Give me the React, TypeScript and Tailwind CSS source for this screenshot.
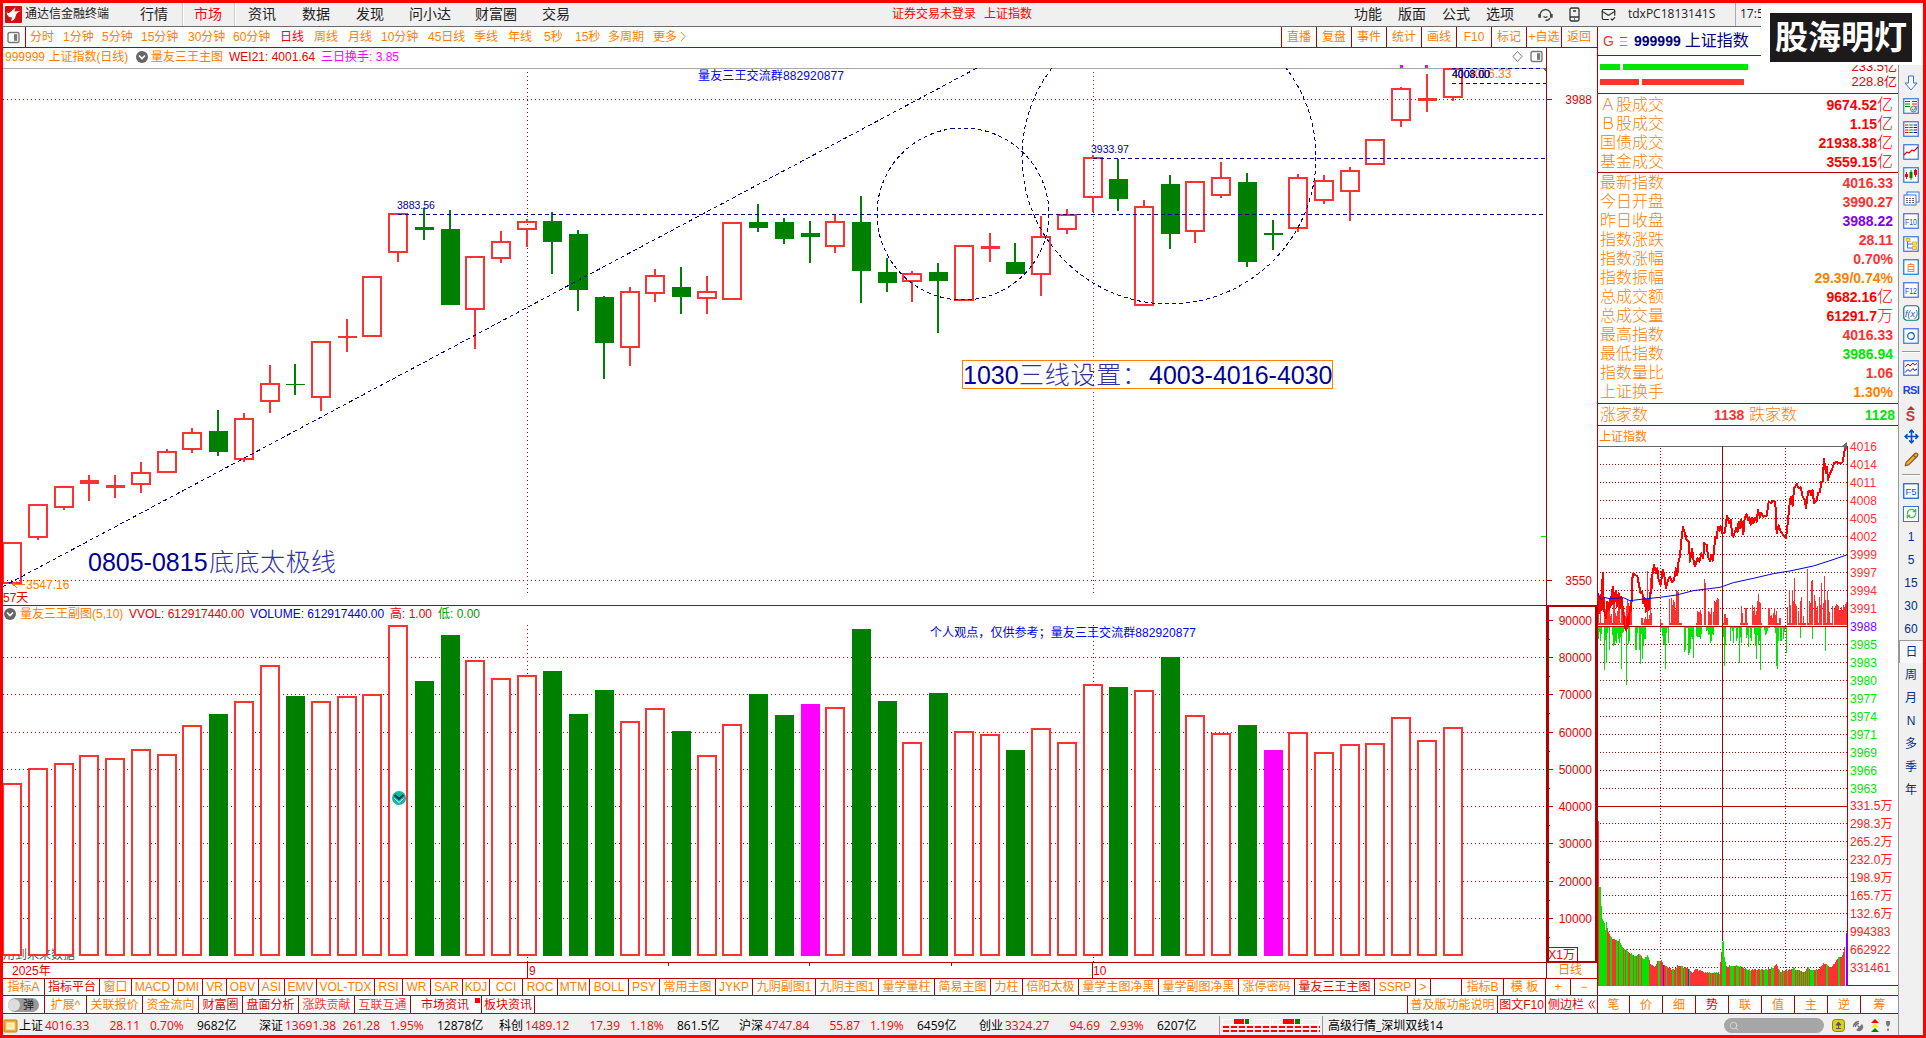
import { MailCheck, Search, Move, Pencil, RefreshCw, SatelliteDish } from 'lucide-react';
import type { ReactNode } from 'react';

type Kind = 'up' | 'down' | 'mark';

const RED = '#ff3232';
const GREEN = '#008000';
const LINE = '#b00000';
const NAVY = '#000099';

// kind, high, body top, body bottom, low
const candles: [Kind, number, number, number, number][] = [
  ['up', 542, 542, 584, 584], ['up', 504, 504, 538, 540], ['up', 486, 486, 508, 510], ['up', 475, 480, 484, 501],
  ['up', 475, 485, 488, 498], ['up', 462, 472, 485, 493], ['up', 449, 451, 473, 473], ['up', 428, 432, 450, 453],
  ['down', 410, 431, 452, 456], ['up', 413, 418, 460, 462], ['up', 365, 383, 402, 413], ['down', 364, 384, 385, 395],
  ['up', 341, 341, 398, 411], ['up', 319, 336, 338, 352], ['up', 276, 276, 337, 337], ['up', 213, 213, 253, 262],
  ['down', 208, 227, 230, 240], ['down', 210, 229, 305, 305], ['up', 256, 256, 310, 349], ['up', 231, 241, 259, 263],
  ['up', 219, 221, 230, 247], ['down', 212, 221, 242, 274], ['down', 230, 234, 290, 311], ['down', 296, 297, 343, 379],
  ['up', 287, 291, 348, 366], ['up', 269, 275, 294, 302], ['down', 267, 287, 297, 314], ['up', 276, 291, 299, 314],
  ['up', 222, 222, 300, 300], ['down', 204, 222, 228, 232], ['down', 218, 222, 239, 244], ['down', 221, 233, 237, 263],
  ['up', 215, 221, 247, 253], ['down', 196, 222, 271, 303], ['down', 258, 272, 283, 292], ['up', 271, 273, 282, 302],
  ['down', 263, 272, 281, 333], ['up', 245, 245, 301, 301], ['up', 233, 246, 249, 262], ['down', 243, 262, 274, 274],
  ['up', 216, 236, 275, 296], ['up', 209, 214, 230, 234], ['up', 155, 157, 198, 212], ['down', 159, 179, 199, 211],
  ['up', 200, 206, 306, 306], ['down', 175, 184, 234, 249], ['up', 181, 181, 232, 243], ['up', 162, 177, 196, 198],
  ['down', 173, 182, 262, 267], ['down', 220, 233, 235, 250], ['up', 174, 177, 229, 232], ['up', 175, 180, 201, 204],
  ['up', 167, 170, 192, 221], ['up', 139, 139, 165, 165], ['up', 87, 88, 121, 127], ['up', 74, 98, 101, 112],
  ['up', 68, 68, 98, 101],
];

const volumeTops = [
  783, 768, 763, 755, 758, 749, 754, 725, 714, 701, 665, 696, 701, 696, 694, 625, 681, 635, 660, 678,
  675, 671, 714, 690, 721, 708, 731, 755, 724, 694, 715, 704, 707, 629, 701, 742, 693, 731, 734, 750,
  728, 742, 684, 687, 690, 657, 715, 733, 725, 750, 732, 752, 744, 743, 717, 740, 727,
];

const barX = (i: number) => Math.round(12.3 + i * 25.72);

const periods: [string, string][] = [
  ['分时', 'w-[33px]'], ['1分钟', 'w-[39px]'], ['5分钟', 'w-[39px]'], ['15分钟', 'w-[47px]'], ['30分钟', 'w-[45px]'],
  ['60分钟', 'w-[47px]'], ['日线', 'w-[34px]'], ['周线', 'w-[34px]'], ['月线', 'w-[33px]'], ['10分钟', 'w-[47px]'],
  ['45日线', 'w-[46px]'], ['季线', 'w-[34px]'], ['年线', 'w-[36px]'], ['5秒', 'w-[31px]'], ['15秒', 'w-[33px]'],
  ['多周期', 'w-[45px]'], ['更多', 'w-[27px]'],
];

const tools = ['直播', '复盘', '事件', '统计', '画线', 'F10', '标记', '+自选', '返回'];

const indicatorTabs: [string, string][] = [
  ['指标A', 'w-[42px]'], ['指标平台', 'w-[55px]'], ['窗口', 'w-[32px]'], ['MACD', 'w-[42px]'], ['DMI', 'w-[29px]'],
  ['VR', 'w-[24px]'], ['OBV', 'w-[32px]'], ['ASI', 'w-[26px]'], ['EMV', 'w-[32px]'], ['VOL-TDX', 'w-[58px]'],
  ['RSI', 'w-[28px]'], ['WR', 'w-[28px]'], ['SAR', 'w-[32px]'], ['KDJ', 'w-[27px]'], ['CCI', 'w-[33px]'],
  ['ROC', 'w-[35px]'], ['MTM', 'w-[32px]'], ['BOLL', 'w-[39px]'], ['PSY', 'w-[31px]'], ['常用主图', 'w-[56px]'],
  ['JYKP', 'w-[37px]'], ['九阴副图1', 'w-[63px]'], ['九阴主图1', 'w-[63px]'], ['量学量柱', 'w-[56px]'],
  ['简易主图', 'w-[56px]'], ['力柱', 'w-[32px]'], ['倍阳太极', 'w-[56px]'], ['量学主图净黑', 'w-[80px]'],
  ['量学副图净黑', 'w-[80px]'], ['涨停密码', 'w-[56px]'], ['量友三王主图', 'w-[80px]'], ['SSRP', 'w-[41px]'],
  ['>', 'w-[15px]'], ['', 'w-[31px]'], ['指标B', 'w-[42px]'], ['模 板', 'w-[42px]'], ['+', 'w-[25px]'], ['−', 'w-[26px]'],
];

const extraTabs: [string, string][] = [
  ['扩展^', 'w-[42px] text-[#ff8000]'], ['关联报价', 'w-[56px] text-[#ff8000]'], ['资金流向', 'w-[56px] text-[#ff8000]'],
  ['财富圈', 'w-[44px] text-[#e60000]'], ['盘面分析', 'w-[56px] text-[#e60000]'], ['涨跌贡献', 'w-[56px] text-[#ff3232]'],
  ['互联互通', 'w-[56px] text-[#ff3232]'], ['市场资讯', 'w-[71px] pr-[2px] text-[#e60000]'], ['板块资讯', 'w-[53px] text-[#e60000]'],
];

const turnover: [string, string][] = [
  ['Ａ股成交', '9674.52'], ['Ｂ股成交', '1.15'], ['国债成交', '21938.38'], ['基金成交', '3559.15'],
];

const quotes: [string, string, string, string][] = [
  ['最新指数', '4016.33', '', 'text-[#ff3232]'],
  ['今日开盘', '3990.27', '', 'text-[#ff3232]'],
  ['昨日收盘', '3988.22', '', 'text-[#8000ff]'],
  ['指数涨跌', '28.11', '', 'text-[#ff3232]'],
  ['指数涨幅', '0.70%', '', 'text-[#ff3232]'],
  ['指数振幅', '29.39/0.74%', '', 'text-[#ff8000]'],
  ['总成交额', '9682.16', '亿', 'text-[#ff0000]'],
  ['总成交量', '61291.7', '万', 'text-[#ff0000]'],
  ['最高指数', '4016.33', '', 'text-[#ff3232]'],
  ['最低指数', '3986.94', '', 'text-[#00e600]'],
  ['指数量比', '1.06', '', 'text-[#ff3232]'],
  ['上证换手', '1.30%', '', 'text-[#ff8000]'],
];

const priceLabels = [
  '4016', '4014', '4011', '4008', '4005', '4002', '3999', '3997', '3994', '3991', '3988',
  '3985', '3983', '3980', '3977', '3974', '3971', '3969', '3966', '3963',
];
const volLabels = ['331.5万', '298.3万', '265.2万', '232.0万', '198.9万', '165.7万', '132.6万', '994383', '662922', '331461'];

const sideTabs: [string, string][] = [
  ['笔', 'w-[32px]'], ['价', 'w-[33px]'], ['细', 'w-[33px]'], ['势', 'w-[33px]'], ['联', 'w-[33px]'],
  ['值', 'w-[33px]'], ['主', 'w-[33px]'], ['逆', 'w-[33px]'], ['筹', 'w-[37px]'],
];

const indices = [
  ['上证', '4016.33', '28.11', '0.70%', '9682亿'],
  ['深证', '13691.38', '261.28', '1.95%', '12878亿'],
  ['科创', '1489.12', '17.39', '1.18%', '861.5亿'],
  ['沪深', '4747.84', '55.87', '1.19%', '6459亿'],
  ['创业', '3324.27', '94.69', '2.93%', '6207亿'],
];

// intraday price and average, three units per pixel
const pricePath =
  '54,1240 58,1300 62,1245 65,1290 68,1180 72,1290 78,1315 82,1265 88,1290 92,1250 95,1275 98,1220 103,1270 107,1232 111,1280 116,1240 120,1285 124,1250 130,1300 134,1340 139,1352 143,1310 146,1335 150,1280 154,1290 156,1200 160,1180 166,1186 172,1188 176,1210 182,1240 187,1235 190,1270 194,1255 198,1295 202,1260 206,1290 210,1240 214,1240 216,1190 222,1155 228,1180 232,1165 236,1200 242,1215 248,1170 252,1180 258,1225 264,1200 270,1190 276,1205 282,1200 288,1165 292,1185 296,1140 300,1130 304,1080 309,1042 316,1065 320,1080 326,1085 330,1145 336,1106 342,1150 346,1158 352,1135 358,1145 364,1120 370,1135 372,1090 380,1095 384,1130 390,1143 394,1125 398,1142 402,1110 406,1070 410,1075 414,1040 418,1052 422,1038 426,1060 434,1058 438,1030 441,1007 448,1030 453,1020 456,1065 460,1070 468,1045 473,1055 476,1025 480,1045 484,1020 490,1062 494,1015 500,1003 504,1020 508,1012 512,1035 516,1015 520,1030 525,1013 530,1025 534,990 540,1012 544,998 550,1010 560,1008 566,965 574,970 580,962 586,968 590,1060 596,1035 602,1055 610,1065 618,1075 622,1040 628,980 632,950 638,978 642,925 650,912 656,925 662,922 668,950 674,960 678,984 684,935 690,932 694,945 698,930 702,970 710,960 714,940 720,935 724,905 728,905 732,838 738,880 741,860 744,900 750,880 756,868 762,850 770,845 776,850 784,850 788,845 794,810 800,800';
const averagePath =
  '54,1240 64,1260 72,1252 90,1256 130,1253 150,1262 200,1256 240,1252 290,1245 340,1232 420,1222 460,1208 520,1195 580,1181 630,1173 700,1158 750,1142 800,1125';

// from, to, tallest
const redSpikes: [number, number, number][] = [
  [1598, 1632, 26], [1641, 1652, 14], [1660, 1663, 8], [1669, 1682, 38], [1696, 1702, 16], [1704, 1706, 46],
  [1708, 1712, 18], [1713, 1719, 28], [1723, 1728, 14], [1740, 1748, 20], [1752, 1762, 26], [1768, 1781, 18],
  [1787, 1797, 42], [1798, 1806, 28], [1807, 1813, 46], [1814, 1822, 36], [1823, 1833, 34],
];
const redPeaks: [number, number][] = [
  [1647, 54], [1650, 47], [1704, 46], [1717, 27], [1758, 31], [1794, 47], [1807, 56], [1811, 44], [1824, 49], [1821, 42], [1676, 35],
];
const greenSpikes: [number, number, number][] = [
  [1598, 1602, 24], [1604, 1610, 24], [1612, 1624, 22], [1626, 1630, 24], [1635, 1642, 28], [1643, 1646, 20],
  [1660, 1669, 22], [1684, 1693, 28], [1696, 1702, 14], [1706, 1714, 18], [1723, 1726, 20], [1730, 1742, 18],
  [1746, 1762, 22], [1764, 1770, 16], [1774, 1786, 20],
];
const greenPeaks: [number, number][] = [
  [1604, 44], [1606, 37], [1621, 43], [1626, 59], [1640, 38], [1642, 33], [1665, 43], [1688, 29], [1693, 32],
  [1724, 40], [1739, 37], [1756, 33], [1760, 44], [1776, 40], [1777, 43], [1786, 27], [1800, 12], [1812, 13], [1825, 25],
];

const turnoverCurve: [number, number][] = [
  [0, 821], [1, 887], [2, 887], [3, 906], [4, 919], [6, 923], [7, 930], [8, 923], [10, 932], [15, 940], [21, 940],
  [24, 947], [30, 952], [37, 957], [41, 953], [45, 960], [49, 955], [52, 963], [56, 967], [60, 960], [63, 960],
  [66, 966], [75, 970], [79, 966], [89, 968], [94, 972], [97, 969], [107, 972], [121, 973], [124, 941], [125, 941],
  [126, 958], [128, 966], [140, 966], [150, 970], [172, 969], [178, 965], [182, 972], [188, 970], [195, 968],
  [205, 973], [210, 967], [213, 971], [222, 968], [226, 963], [231, 967], [237, 963], [240, 956], [243, 957], [246, 948],
];

const noise = (n: number) => {
  const s = Math.sin(n * 127.1 + 3.7) * 43758.5453;
  return s - Math.floor(s);
};

const curveAt = (x: number) => {
  const k = turnoverCurve.findIndex(([cx]) => cx >= x);
  if (k <= 0) return turnoverCurve[0][1];
  const [x0, y0] = turnoverCurve[k - 1];
  const [x1, y1] = turnoverCurve[k];
  return y0 + ((y1 - y0) * (x - x0)) / (x1 - x0);
};

function CollapseIcon() {
  return (
    <svg width="12" height="12" viewBox="0 0 12 12" className="shrink-0">
      <circle cx="6" cy="6" r="6" fill="#666" />
      <path d="M3 4.5l3 3 3-3" fill="none" stroke="#fff" strokeWidth="1.6" />
    </svg>
  );
}

function PanelIcon() {
  return (
    <svg width="13" height="13" viewBox="0 0 13 13" className="shrink-0">
      <rect x="1" y="1.5" width="11" height="10" rx="1.5" fill="#fff" stroke="#777" strokeWidth="1.4" />
      <rect x="7" y="3.2" width="3.2" height="6.6" fill="#777" />
    </svg>
  );
}

function Header() {
  return (
    <header className="flex h-6 shrink-0 items-center whitespace-nowrap border-b border-[#6b6b6b] bg-[#f0f0f0] pb-px text-sm text-[#222]">
      <svg width="17" height="17" viewBox="0 0 17 17" className="ml-[2px]">
        <rect width="17" height="17" rx="1" fill="#d40d0d" />
        <path d="M1.500 6.500C3.500 7.500 5 7 6.500 5L10.500 1.500 9.500 5.500 15.500 5C12.500 6 11 8 10.500 10.500 10 13 8.500 14.500 6 15L7 11.500C4 11.500 2 9.500 1.500 6.500Z" fill="#fff" />
      </svg>
      <span className="ml-[3px] w-[100px] text-xs">通达信金融终端</span>
      <span className="ml-[15px]">行情</span>
      <span className="ml-[14px] h-[23px] w-[2px] border-l border-[#ccc] bg-white" />
      <span className="ml-[10px] text-[#ff0000]">市场</span>
      <span className="ml-[12px] h-[23px] w-[2px] border-l border-[#ccc] bg-white" />
      <span className="ml-[12px]">资讯</span>
      <span className="ml-[26px]">数据</span>
      <span className="ml-[26px]">发现</span>
      <span className="ml-[25px]">问小达</span>
      <span className="ml-[24px]">财富圈</span>
      <span className="ml-[25px] w-[350px]">交易</span>
      <span className="w-[92px] text-xs text-[#ff0000]">证券交易未登录</span>
      <span className="w-[370px] text-xs text-[#ff0000]">上证指数</span>
      <span className="w-[44px]">功能</span>
      <span className="w-[44px]">版面</span>
      <span className="w-[44px]">公式</span>
      <span className="w-[52px]">选项</span>
      <svg width="15" height="15" viewBox="0 0 15 15" fill="none" stroke="#444" strokeWidth="1.400">
        <path d="M2.500 9.500a5.300 5.300 0 1 1 10 0M1 7v3h2M14 7v3h-2M5.500 9.500a3 3 0 0 0 4 0M12 11c-.8 1.800-2 2.500-4.500 2.500" />
      </svg>
      <svg width="11" height="15" viewBox="0 0 11 15" fill="none" stroke="#333" strokeWidth="1.300" className="ml-[16px]">
        <rect x="1" y="1" width="9" height="13" rx="1.500" />
        <path d="M1 10h9M4 4h3M5 12h1" />
      </svg>
      <MailCheck size={15} strokeWidth={1.8} className="ml-[21px]" />
      <span className="ml-[12px] w-[107px] font-['Open_Sans',sans-serif] text-xs">tdxPC1813141S</span>
      <span className="h-[23px] w-px bg-[#aaa]" />
      <span className="ml-[4px] font-['Open_Sans',sans-serif] text-xs">17:5</span>
    </header>
  );
}

function PeriodBar() {
  return (
    <div className="flex h-[21px] shrink-0 items-stretch whitespace-nowrap border-b border-[#b00000] text-xs leading-[21px] text-[#ff8000]">
      <div className="flex w-[23px] items-center border-r border-[#b00000] pl-1">
        <PanelIcon />
      </div>
      <div className="flex w-[1255px] shrink-0 pl-1">
        {periods.map(([label, width]) => (
          <span key={label} className={`${width} ${label === '日线' ? 'text-[#ff0000]' : ''}`}>
            {label}
          </span>
        ))}
        <svg width="6" height="12" viewBox="0 0 6 12" className="mt-1">
          <path d="M1 1l4 4.500-4 4.500" fill="none" stroke="#ff8000" />
        </svg>
      </div>
      {tools.map((t) => (
        <span key={t} className="flex w-[35px] shrink-0 justify-center border-l border-[#b00000]">
          {t}
        </span>
      ))}
    </div>
  );
}

function CandleChart() {
  return (
    <svg width="1543" height="537" viewBox="3 68 1543 537" className="block overflow-visible" shapeRendering="crispEdges">
      <clipPath id="plot">
        <rect x="3" y="68" width="1543" height="537" />
      </clipPath>
      <path d="M3 68.500H1546" stroke="#aaa" />
      <g stroke={LINE} strokeDasharray="1 3">
        <path d="M3 99.500H1546M3 580.500H1546M527.500 72V594M1093.500 72V594" />
      </g>
      {candles.map(([kind, high, top, bottom, low], i) => {
        const x = barX(i);
        const color = kind === 'up' ? RED : GREEN;
        const solid = kind === 'down' || bottom - top < 5;
        return (
          <g key={i} fill={color}>
            <rect x={x - 1} y={high} width="2" height={top - high} />
            <rect x={x - 1} y={bottom} width="2" height={low - bottom} />
            {solid ? (
              <rect x={x - 9} y={top} width="19" height={bottom - top} />
            ) : (
              <rect x={x - 9} y={top + 1} width="18" height={bottom - top - 2} fill="none" stroke={color} strokeWidth="2" />
            )}
          </g>
        );
      })}
      <rect x="1400" y="65" width="3" height="3" fill="#f0f" />
      <rect x="1425" y="65" width="3" height="3" fill="#f0f" />
      <g fill="none" stroke={NAVY} strokeDasharray="4 3" clipPath="url(#plot)">
        <path d="M3 586.500L977 68M398 214.500H1546M1093 158.500H1546M1452 68.500H1546M1452 83.500H1546" />
        <circle cx="963" cy="214" r="86" />
        <circle cx="1169" cy="157" r="147" />
      </g>
      <path d="M1542 68h4v4z" fill="#666" />
      <path d="M1541 536.500h5" stroke="#00e600" />
      <g fontSize="10.500" fill={NAVY}>
        <text x="397" y="209">3883.56</text>
        <text x="1091" y="153">3933.97</text>
        <text x="1468" y="78" fontSize="12" fill="#ff8000">4016.33</text>
        <text x="1452" y="78">4008.00</text>
        <text x="1452" y="78">4003.00</text>
      </g>
      <text x="698" y="80" fontSize="12" fill="#0000ff" textLength="146">量友三王交流群882920877</text>
      <g fontSize="25" fill={NAVY}>
        <text x="88" y="571">0805-0815</text>
        <text x="209" y="571" textLength="127" fontWeight="300" fill="#3030ad">底底太极线</text>
        <text x="963" y="384">1030</text>
        <text x="1019" y="384" textLength="128" fontWeight="300" fill="#3030ad">三线设置：</text>
        <text x="1149" y="384">4003-4016-4030</text>
      </g>
      <rect x="962.500" y="360.500" width="370" height="28" fill="none" stroke="#ff8000" />
      <path d="M25 584.500H13M17 581l-4 3.500 4 3.500" fill="none" stroke="#ff8000" />
      <text x="26" y="589" fontSize="12" fill="#ff8000">3547.16</text>
      <text x="3" y="602" fontSize="12" fill="#e60000">57天</text>
    </svg>
  );
}

function VolumeChart() {
  return (
    <svg width="1543" height="338" viewBox="3 624 1543 338" className="block" shapeRendering="crispEdges">
      <g stroke={LINE} strokeDasharray="1 3">
        {[657, 694, 732, 769, 806, 843, 881, 918].map((y) => (
          <path key={y} d={`M3 ${y}.5H1546`} />
        ))}
        <path d="M527.500 625V962M1093.500 625V962" />
      </g>
      <text x="3" y="959" fontSize="12" fill="#555">用到未来数据</text>
      {volumeTops.map((top, i) => {
        const x = barX(i);
        const kind: Kind = i === 31 || i === 49 ? 'mark' : candles[i][0];
        if (kind === 'up') {
          return <rect key={i} x={x - 9} y={top + 1} width="18" height={954 - top} fill="#fff" stroke={RED} strokeWidth="2" />;
        }
        return <rect key={i} x={x - 9} y={top} width="19" height={956 - top} fill={kind === 'mark' ? '#ff00ff' : GREEN} />;
      })}
      <g shapeRendering="auto">
        <circle cx="399" cy="798" r="7" fill="#17b5a6" />
        <path d="M394.500 795l4.500 4 4.500-4" fill="none" stroke="#063f4a" strokeWidth="2" />
        <path d="M394.500 798.500l4.500 4 4.500-4" fill="none" stroke="#d8fff8" strokeWidth="1" />
      </g>
      <text x="930" y="637" fontSize="12" fill="#0000ff" textLength="266">个人观点，仅供参考；量友三王交流群882920877</text>
    </svg>
  );
}

function Axis() {
  return (
    <svg width="51" height="915" viewBox="1546 48 51 915" className="block shrink-0">
      <g shapeRendering="crispEdges" stroke={LINE} fill="none">
        <path d="M1546.500 48V963M1547 99.500h5M1547 580.500h5M1546 962.500h51" />
        <rect x="1548" y="606" width="48" height="356" strokeWidth="2" />
        {[620, 657, 694, 732, 769, 806, 843, 881, 918].map((y) => (
          <path key={y} d={`M1549 ${y}.5h4M1549 ${y + 19}.5h1`} />
        ))}
        <rect x="1547.500" y="947.500" width="30" height="14" />
      </g>
      <g fontSize="12" fill="#e60000" textAnchor="end">
        <text x="1592" y="104">3988</text>
        <text x="1592" y="585">3550</text>
        {[620, 657, 694, 732, 769, 806, 843, 881, 918].map((y, i) => (
          <text key={y} x="1592" y={y + 5}>
            {90000 - i * 10000}
          </text>
        ))}
        <text x="1575" y="959">X1万</text>
      </g>
    </svg>
  );
}

function DateRow() {
  return (
    <div className="flex h-4 shrink-0 border-b border-[#b00000]">
      <svg width="1543" height="15" viewBox="3 963 1543 15" className="block">
        <path d="M527.500 963V978M1092.500 963V978M668.500 963v3M809.500 963v3M951.500 963v3" stroke={LINE} shapeRendering="crispEdges" />
        <g fontSize="12" fill="#e60000">
          <text x="12" y="975">2025年</text>
          <text x="529" y="975">9</text>
          <text x="1093" y="975">10</text>
        </g>
      </svg>
      <span className="flex-1 border-l border-[#b00000] pl-[11px] text-xs leading-[15px] text-[#ff8000]">日线</span>
    </div>
  );
}

function TabRows() {
  return (
    <>
      <div className="flex h-[17px] shrink-0 whitespace-nowrap border-b border-[#b00000] text-xs leading-4 text-[#ff8000]">
        {indicatorTabs.map(([label, width], i) => (
          <span
            key={i}
            className={`${width} flex shrink-0 justify-center border-r border-[#b00000] last:border-r-0 ${
              label === '指标平台' || label === '量友三王主图' ? 'text-[#e60000]' : ''
            }`}
          >
            {label}
          </span>
        ))}
      </div>
      <div className="flex h-[18px] shrink-0 whitespace-nowrap border-b border-[#b00000] text-xs leading-[18px]">
        <div className="flex w-[42px] items-center justify-center border-r border-[#b00000]">
          <div className="flex h-[14px] w-[31px] items-center rounded-full bg-[#999] text-[11px] text-[#222]">
            <span className="mr-[3px] h-[12px] w-[12px] rounded-full bg-[#ddd]" />弹
          </div>
        </div>
        {extraTabs.map(([label, cls]) => (
          <span key={label} className={`${cls} relative flex shrink-0 justify-center border-r border-[#b00000]`}>
            {label}
            {label === '市场资讯' && <i className="absolute right-[1px] top-[2px] h-[5px] w-[5px] bg-[#ff0000]" />}
          </span>
        ))}
        <span className="ml-auto flex w-[91px] justify-center border-x border-[#b00000] text-[#ff8000]">普及版功能说明</span>
        <span className="flex w-[48px] justify-center border-r border-[#b00000] text-[#e60000]">图文F10</span>
        <span className="flex w-[51px] items-center justify-center gap-1 text-[#e60000]">
          侧边栏
          <svg width="7" height="9" viewBox="0 0 7 9">
            <path d="M3.500 0.500L1 4.500l2.500 4M6.500 0.500L4 4.500l2.500 4" fill="none" stroke="#e60000" />
          </svg>
        </span>
      </div>
    </>
  );
}

function Intraday() {
  return (
    <svg width="300" height="549" viewBox="1598 446 300 549" className="block overflow-visible">
      <g shapeRendering="crispEdges">
        <g stroke={LINE} strokeDasharray="1 2" fill="none">
          {Array.from({ length: 19 }, (_, i) => (
            <path key={i} d={`M1600 ${464 + i * 18}.5H1847`} />
          ))}
          {Array.from({ length: 9 }, (_, i) => (
            <path key={i} d={`M1600 ${823 + i * 18}.5H1847`} />
          ))}
          <path d="M1660.500 448V985M1785.500 448V985" />
        </g>
        <path d="M1598 446.500H1847" stroke="#666" />
        {redSpikes.flatMap(([from, to, max]) =>
          Array.from({ length: to - from }, (_, k) => {
            const x = from + k;
            const h = noise(x) < 0.22 ? 2 : Math.round(max * (0.3 + 0.7 * noise(x * 3)));
            return <rect key={`r${x}`} x={x} y={625 - h} width="1" height={h} fill={RED} />;
          }),
        )}
        {Array.from({ length: 13 }, (_, k) => {
          const h = 15 + Math.round(noise(k) * 8);
          return <rect key={`e${k}`} x={1834 + k} y={625 - h} width="1" height={h} fill={RED} />;
        })}
        {redPeaks.map(([x, h]) => (
          <rect key={x} x={x} y={625 - h} width="1" height={h} fill={RED} />
        ))}
        {greenSpikes.flatMap(([from, to, max]) =>
          Array.from({ length: to - from }, (_, k) => {
            const x = from + k;
            const h = noise(x + 9) < 0.25 ? 2 : Math.round(max * (0.2 + 0.8 * noise(x * 5)));
            return <rect key={`g${x}`} x={x} y={626} width="1" height={h} fill="#00e600" />;
          }),
        )}
        {greenPeaks.map(([x, h]) => (
          <rect key={x} x={x} y={626} width="1" height={h} fill="#00e600" />
        ))}
        {Array.from({ length: 247 }, (_, i) => {
          const y = Math.round(curveAt(i) + (i > 6 ? noise(i) * 2 - 1 : 0));
          const greenShare = i < 1 ? 0 : i < 5 ? 1 : i < 34 ? 0.5 : i < 52 ? 0.7 : i < 84 ? 0.15 : i > 215 ? 0.2 : 0.45;
          const green = noise(i * 7) < greenShare || (i > 123 && i < 127);
          const fill = i === 65 || i === 90 ? '#8000ff' : green ? '#00e600' : RED;
          return <rect key={i} x={1598 + i} y={y} width="1" height={986 - y} fill={fill} />;
        })}
        <rect x="1846" y="933" width="2" height="53" fill="#8000ff" />
        <path d="M1598 626.500H1847M1598 806.500H1847M1722.500 446V941M1847.500 446V933M1847 985.500H1898" stroke={LINE} fill="none" />
        <g transform="translate(1580 180) scale(.33333)" fill="none" strokeLinejoin="round">
          <polyline points={pricePath} stroke="#ff0000" strokeWidth="6" />
          <polyline points={averagePath} stroke="#0000e6" strokeWidth="3" />
        </g>
      </g>
      <path d="M1842 446l5-4v8z" fill="#666" />
      <g fontSize="12" letterSpacing="0.1">
        {priceLabels.map((label, i) => (
          <text key={label} x="1850" y={451 + i * 18} fill={i < 10 ? RED : i === 10 ? '#8000ff' : '#00e600'}>
            {label}
          </text>
        ))}
        {volLabels.map((label, i) => (
          <text key={label} x="1850" y={810 + i * 18} fill="#ff2020">
            {label}
          </text>
        ))}
      </g>
    </svg>
  );
}

function QuotePanel() {
  return (
    <aside className="flex w-[300px] shrink-0 flex-col whitespace-nowrap text-base text-[#ff8000]">
      <div className="flex h-[29px] items-center border-b border-[#b00000] pl-[5px] text-[#000080]">
        <span className="w-[17px] text-sm text-[#ff3232]">G</span>
        <span className="mr-[7px] flex w-[7px] flex-col gap-[3px]">
          <i className="h-px bg-[#ff3232]" />
          <i className="h-px bg-[#bbb]" />
          <i className="h-px bg-[#00e600]" />
        </span>
        <span className="mr-[4px] text-sm font-bold">999999</span>
        上证指数
      </div>
      <div className="flex h-[38px] flex-col justify-between border-b border-[#b00000] py-[4px] pl-[2px] pr-[1px] text-[13px] leading-[14px] text-[#e60000]">
        <div className="flex items-center gap-[3px]">
          <i className="h-[6px] w-[20px] bg-[#00e600]" />
          <i className="h-[6px] w-[125px] bg-[#00e600]" />
          <span className="ml-auto">233.5亿</span>
        </div>
        <div className="flex items-center gap-[3px]">
          <i className="h-[6px] w-[39px] bg-[#ff3232]" />
          <i className="h-[6px] w-[102px] bg-[#ff3232]" />
          <span className="ml-auto">228.8亿</span>
        </div>
      </div>
      <div className="h-[79px] border-b border-[#b00000] pl-[2px] pr-[5px] pt-px">
        {turnover.map(([label, value]) => (
          <div key={label} className="flex h-[19px] items-center">
            <span className="flex-1 font-light">{label}</span>
            <span className="text-sm font-bold text-[#ff0000]">{value}</span>
            <span className="font-light text-[#ff0000]">亿</span>
          </div>
        ))}
      </div>
      <div className="h-[231px] border-b border-[#b00000] pl-[2px] pr-[5px]">
        {quotes.map(([label, value, unit, cls]) => (
          <div key={label} className="flex h-[19px] items-center">
            <span className="flex-1 font-light">{label}</span>
            <span className={`text-sm font-bold ${cls}`}>{value}</span>
            {unit && <span className={`font-light ${cls}`}>{unit}</span>}
          </div>
        ))}
      </div>
      <div className="flex h-[22px] items-center border-b border-[#b00000] pl-[2px] pr-[3px]">
        <span className="w-[114px] font-light">涨家数</span>
        <span className="w-[35px] text-sm font-bold text-[#ff3232]">1138</span>
        <span className="flex-1 font-light">跌家数</span>
        <span className="text-sm font-bold text-[#00e600]">1128</span>
      </div>
      <div className="h-5 pl-[1px] text-xs leading-[22px]">上证指数</div>
      <Intraday />
      <div className="flex h-[19px] border-y border-[#b00000] text-xs leading-[19px]">
        {sideTabs.map(([label, width]) => (
          <span
            key={label}
            className={`${width} flex justify-center border-r border-[#b00000] last:border-r-0 ${label === '势' ? 'text-[#e60000]' : ''}`}
          >
            {label}
          </span>
        ))}
      </div>
    </aside>
  );
}

function StatusBar() {
  return (
    <footer className="flex h-[21px] shrink-0 items-center whitespace-nowrap bg-[#f0f0f0] pt-[2px] font-['Open_Sans','Noto_Sans_CJK_SC',sans-serif] text-xs text-[#ff0000]">
      <svg width="16" height="14" viewBox="0 0 16 14">
        <rect x="1" y="1" width="13" height="12" rx="1" fill="#f0b030" stroke="#c88010" />
        <rect x="4" y="4" width="7" height="6" fill="#ffe9a0" stroke="#fff" />
      </svg>
      {indices.map(([name, value, change, pct, amount]) => (
        <div key={name} className="flex w-[240px] shrink-0">
          <span className="w-[26px] text-black">{name}</span>
          <span className="w-[57px]">{value}</span>
          <span className="w-[38px] text-right">{change}</span>
          <span className="w-[48px] pl-[10px]">{pct}</span>
          <span className="pl-[9px] text-black">{amount}</span>
        </div>
      ))}
      <svg width="104" height="19" viewBox="1219 1016 104 19" shapeRendering="crispEdges" className="shrink-0">
        <path d="M1219.500 1014v21M1322.500 1014v21" stroke="#999" />
        <rect x="1222" y="1019" width="48" height="5" fill="none" stroke="#fff" />
        <rect x="1272" y="1019" width="47" height="5" fill="none" stroke="#fff" />
        <rect x="1234" y="1019" width="10" height="5" fill="#ff0000" />
        <rect x="1245" y="1019" width="4" height="5" fill="#008000" />
        <rect x="1283" y="1019" width="11" height="5" fill="#ff0000" />
        <rect x="1295" y="1019" width="5" height="5" fill="#008000" />
        <path d="M1223 1027h97M1223 1031h97" stroke="#ff0000" strokeWidth="2" strokeDasharray="6 2" />
      </svg>
      <span className="ml-[5px] flex-1 text-black">高级行情_深圳双线14</span>
      <div className="mr-[8px] flex h-[15px] w-[100px] items-center rounded-full bg-[#a6a6a6] pl-[5px]">
        <Search size={10} color="#ddd" />
      </div>
      <svg width="13" height="13" viewBox="0 0 13 13">
        <rect x=".5" y=".5" width="12" height="12" rx="3" fill="#d8d020" stroke="#8a8500" />
        <path d="M6.500 3L4 6h5zM6.500 5v4M4 9.500h5" fill="#555" stroke="#555" />
      </svg>
      <SatelliteDish size={12} strokeWidth={2.6} color="#777" fill="#777" className="ml-[7px] -scale-x-100" />
      <svg width="8" height="13" viewBox="0 0 8 13" className="ml-[7px]">
        <path d="M4 0l4 4H0z" fill="#ff0000" />
        <path d="M4 4.500l4 4H0z" fill="#ffef00" />
        <path d="M4 9l4 4H0z" fill="#008000" />
      </svg>
      <svg width="4" height="11" viewBox="0 0 4 11" className="ml-[7px] mr-[8px]">
        <path d="M0 1h4v3l-1.300 2.500H1.300L0 4zM1.200 8.500h1.600V11H1.200z" fill="#777" />
      </svg>
    </footer>
  );
}

function Boxed({ children, color = '#3a6fe0' }: { children?: ReactNode; color?: string }) {
  return (
    <svg width="16" height="16" viewBox="0 0 16 16">
      <rect x=".75" y=".75" width="14.500" height="14.500" fill="#fff" stroke={color} strokeWidth="1.200" />
      {children}
    </svg>
  );
}

function BoxText({ text, color = '#1a4fd0', border }: { text: string; color?: string; border?: string }) {
  return (
    <Boxed color={border}>
      <text x="8" y="12" fontSize="9.500" textAnchor="middle" fill={color} textLength={text.length > 2 ? 12 : undefined} lengthAdjust="spacingAndGlyphs">
        {text}
      </text>
    </Boxed>
  );
}

const sideIcons: ReactNode[] = [
  <svg width="16" height="16" viewBox="0 0 16 16">
    <path d="M5.500 1h5v7h3.500L8 15 2 8h3.500z" fill="#fff" stroke="#3a6fe0" />
  </svg>,
  <Boxed>
    <path d="M2 3.500h5M2 6h5M2 8.500h5" stroke="#008000" />
    <path d="M9 3.500h5M9 6h5" stroke="#ff0000" />
    <circle cx="10.500" cy="11" r="3" fill="#ddd" stroke="#777" />
    <path d="M9 11l1.500 1.500L14 8" fill="none" stroke="#777" />
  </Boxed>,
  <Boxed>
    <path d="M2 4h3.500M2 6.500h3.500M2 9h3.500M2 11.500h3.500" stroke="#ff0000" />
    <path d="M6.300 4h3.500M6.300 6.500h3.500M6.300 9h3.500M6.300 11.500h3.500" stroke="#008000" />
    <path d="M10.600 4H14M10.600 6.500H14M10.600 9H14M10.600 11.500H14" stroke="#0000ff" />
  </Boxed>,
  <Boxed>
    <path d="M1 11l3-3 2 1 3-3 2 1 4-4" fill="none" stroke="#e00000" strokeWidth="1.200" />
  </Boxed>,
  <Boxed>
    <path d="M3.500 5v7M12.500 2v8" stroke="#ff0000" />
    <path d="M8 3v10" stroke="#008000" />
    <path d="M2 7h3v3H2zM11 3h3v5h-3z" fill="#ff0000" />
    <path d="M6.500 5h3v6h-3z" fill="#008000" />
  </Boxed>,
  <svg width="17" height="15" viewBox="0 0 17 15">
    <rect x="4" y="1" width="12" height="10" fill="#fff" stroke="#3a6fe0" />
    <rect x="1" y="4" width="12" height="10" fill="#fff" stroke="#3a6fe0" />
    <path d="M3 7.500h8M3 9.500h8M3 11.500h8" stroke="#666" strokeDasharray="2 1" />
  </svg>,
  <BoxText text="F10" />,
  <Boxed>
    <path d="M4.500 5v7H10M4.500 8H10" fill="none" stroke="#3a6fe0" />
    <path d="M3 2.500h4v3H3zM9.500 6h4v3h-4zM9.500 10.500h4v3h-4z" fill="#ffe070" stroke="#e0a000" strokeWidth=".8" />
  </Boxed>,
  <BoxText text="自" color="#ff6a20" border="#0080e0" />,
  <BoxText text="F12" />,
  <svg width="17" height="16" viewBox="0 0 17 16">
    <rect x=".75" y=".75" width="15" height="14.500" rx="3" fill="#fff" stroke="#0a7a70" strokeWidth="1.200" />
    <text x="8.500" y="11.500" fontSize="9" fontStyle="italic" textAnchor="middle" fill="#1a4fd0">f(x)</text>
  </svg>,
  <Boxed>
    <circle cx="8" cy="8" r="3.300" fill="none" stroke="#0060d0" strokeWidth="1.200" />
  </Boxed>,
];

const sideIcons2: ReactNode[] = [
  <Boxed>
    <path d="M2 7l3-3 2 2 3-3 1.500 2L14 3.500" fill="none" stroke="#e00000" />
    <path d="M2 12.500l3-3 2 2 3-3 1.500 2L14 9" fill="none" stroke="#0000e0" />
  </Boxed>,
  <b className="text-[11px] tracking-tighter text-[#2540e0]">RSI</b>,
  <svg width="14" height="16" viewBox="0 0 14 16">
    <path d="M7 0l4 4H3z" fill="#c03030" />
    <text x="6.500" y="14.500" fontSize="14" fontWeight="700" textAnchor="middle" fill="#c03838">S</text>
  </svg>,
  <Move size={15} strokeWidth={2.6} color="#0a50b8" />,
  <Pencil size={15} strokeWidth={2} color="#8a5a20" fill="#f0b040" />,
];

const sideIcons3: ReactNode[] = [
  <BoxText text="F5" border="#0060d0" />,
  <span className="flex h-4 w-4 items-center justify-center border border-[#3a6fe0] bg-white">
    <RefreshCw size={11} strokeWidth={3} color="#4cb848" />
  </span>,
];

const sidePeriods = ['1', '5', '15', '30', '60', '日', '周', '月', 'N', '多', '季', '年'];

function Toolbar() {
  return (
    <nav className="flex w-[25px] shrink-0 flex-col border-l border-[#999] bg-[#f0f0f0] pt-[45px] text-xs text-[#003080]">
      {sideIcons.map((icon, i) => (
        <div key={i} className="flex h-[23px] items-center justify-center pb-px">{icon}</div>
      ))}
      <div className="mx-[3px] my-[3px] h-[2px] border-t border-[#999] bg-white" />
      {sideIcons2.map((icon, i) => (
        <div key={i} className="flex h-[23px] items-center justify-center">{icon}</div>
      ))}
      <div className="mx-[3px] my-[3px] h-[2px] border-t border-[#999] bg-white" />
      {sideIcons3.map((icon, i) => (
        <div key={i} className="flex h-[23px] items-center justify-center">{icon}</div>
      ))}
      {sidePeriods.map((p) => (
        <div
          key={p}
          className={`flex h-[23px] items-center justify-center ${p === '日' ? 'border-l border-t border-[#999] bg-[#f8f8f8]' : ''}`}
        >
          {p}
        </div>
      ))}
    </nav>
  );
}

export default function App() {
  return (
    <div className="relative flex h-[1038px] w-[1926px] flex-col overflow-hidden border-[3px] border-[#ff0000] bg-white font-['Liberation_Sans','Noto_Sans_CJK_SC',sans-serif]">
      <Header />
      <div className="flex flex-1">
        <div className="flex w-[1895px] flex-col">
          <div className="flex h-[987px]">
            <main className="flex w-[1595px] shrink-0 flex-col overflow-hidden border-r border-[#b00000]">
              <PeriodBar />
              <div className="flex h-[915px] shrink-0">
                <div className="flex w-[1543px] flex-col whitespace-nowrap text-xs">
                  <div className="flex h-5 items-center pl-[2px] pb-[3px] text-[#ff8000]">
                    <span className="w-[131px]">999999 上证指数(日线)</span>
                    <CollapseIcon />
                    <span className="ml-[3px] w-[78px]">量友三王主图</span>
                    <span className="w-[92px] text-[#e60000]">WEI21: 4001.64</span>
                    <span className="flex-1 text-[#ff00ff]">三日换手: 3.85</span>
                    <svg width="11" height="13" viewBox="0 0 11 13" className="mr-[7px]">
                      <path d="M5.500 1.500l4.500 5-4.500 5-4.500-5z" fill="#fff" stroke="#777" />
                    </svg>
                    <PanelIcon />
                    <span className="w-[3px]" />
                  </div>
                  <CandleChart />
                  <div className="flex h-[19px] items-center border-t border-[#b00000] pb-[2px] pl-[1px]">
                    <CollapseIcon />
                    <span className="ml-[4px] w-[109px] text-[#ff8000]">量友三王副图(5,10)</span>
                    <span className="w-[121px] text-[#e60000]">VVOL: 612917440.00</span>
                    <span className="w-[140px] text-[#0000e6]">VOLUME: 612917440.00</span>
                    <span className="w-[48px] text-[#e60000]">高: 1.00</span>
                    <span className="text-[#009900]">低: 0.00</span>
                  </div>
                  <VolumeChart />
                  <div className="h-px bg-[#b00000]" />
                </div>
                <Axis />
              </div>
              <DateRow />
              <TabRows />
            </main>
            <QuotePanel />
          </div>
          <StatusBar />
        </div>
        <Toolbar />
      </div>
      <div className="absolute left-[1758px] top-[2px] flex h-[60px] w-[162px] justify-start bg-white pl-[9px] pt-[8px]">
        <div className="flex h-[49px] w-[142px] items-center justify-center bg-[#1c1a1b] text-[33px] font-bold leading-none text-white">
          股海明灯
        </div>
      </div>
    </div>
  );
}
